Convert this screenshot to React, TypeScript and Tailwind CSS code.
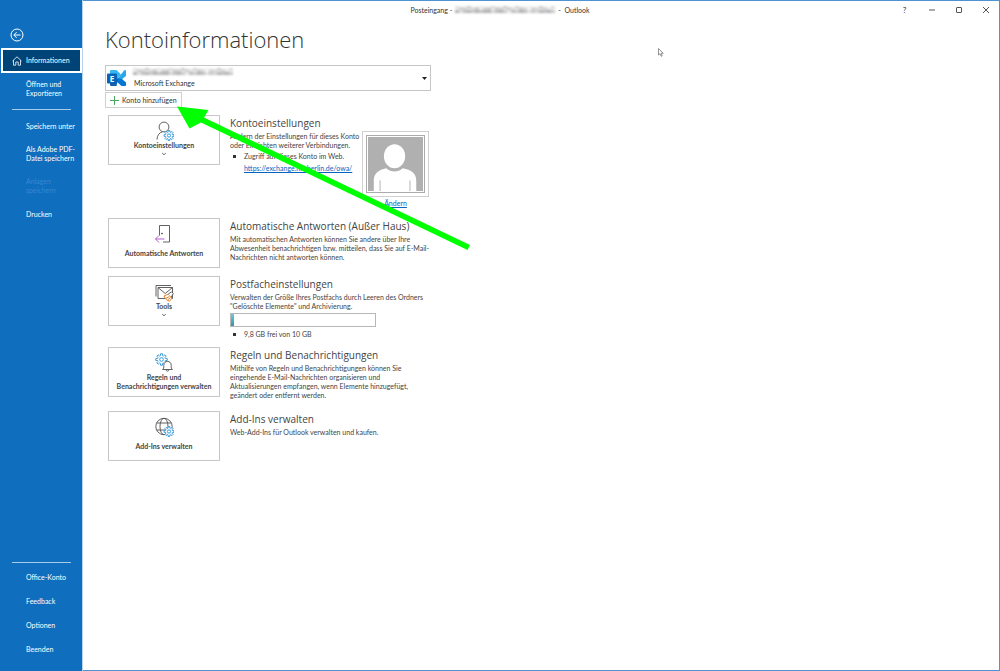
import type { ReactNode } from "react";
import clsx from "clsx";

const topItems = [["Öffnen und", "Exportieren"]];
const saveItems = [
  { lines: ["Speichern unter"] },
  { lines: ["Als Adobe PDF-", "Datei speichern"] },
  { lines: ["Anlagen", "speichern"], disabled: true },
  { lines: ["Drucken"] },
];
const bottomItems = ["Office-Konto", "Feedback", "Optionen", "Beenden"];

const Lines = ({ lines }: { lines: string[] }) => (
  <>
    {lines.map((line) => (
      <span key={line} className="block whitespace-nowrap">
        {line}
      </span>
    ))}
  </>
);

/* ---------- Icons ---------- */

const gearPoints = (cx: number, cy: number, r: number) => {
  const points: string[] = [];
  for (let i = 0; i < 8; i++) {
    const base = (i * Math.PI) / 4;
    [
      [-0.26, 0.7],
      [-0.17, 1],
      [0.17, 1],
      [0.26, 0.7],
    ].forEach(([a, k]) => {
      points.push(`${(cx + Math.cos(base + a) * r * k).toFixed(2)},${(cy + Math.sin(base + a) * r * k).toFixed(2)}`);
    });
  }
  return points.join(" ");
};

const Gear = ({ cx, cy, r }: { cx: number; cy: number; r: number }) => (
  <g stroke="#3a9be0" strokeWidth="1" fill="#fff" strokeLinejoin="round">
    <polygon points={gearPoints(cx, cy, r)} />
    <circle cx={cx} cy={cy} r={r * 0.32} />
  </g>
);

const Icon = ({ children }: { children: ReactNode }) => (
  <svg viewBox="0 0 20 20" className="size-5 shrink-0" fill="none" stroke="#505050" strokeWidth="0.9" aria-hidden="true">
    {children}
  </svg>
);

const AccountIcon = () => (
  <Icon>
    <circle cx="10" cy="6" r="4.900" />
    <path d="M3 18.500c.2-4.200 2.200-6.800 5.400-7.700" />
    <Gear cx={15} cy={14.500} r={5} />
  </Icon>
);

const DoorIcon = () => (
  <Icon>
    <path d="M5.500 11.500V1.500h10v16.500H9" />
    <circle cx="8" cy="9.500" r=".5" fill="#505050" />
    <path d="M10.500 15H1.500M5 11.500L1.500 15L5 18.500" stroke="#b65fcf" strokeWidth="1" />
  </Icon>
);

const ToolsIcon = () => (
  <Icon>
    <path d="M2 14.500V3.500H17" />
    <path d="M4 5.500h14.500v11H4zM4 5.500l7.200 6L18.500 5.500" fill="#fff" />
    <path d="M10 14l4.200-1.800 3.800 3.800-2.500 3.200c-2.500-.6-4.500-2.300-5.500-5.200z" fill="#fff" stroke="#e8822a" strokeWidth="1" />
    <path d="M11.500 16.500l4-2M13.500 18l3-2.500" stroke="#e8822a" strokeWidth="1" />
    <path d="M14.200 12.200l3.300-2.400 1.800 1.800-2 3.400" fill="#fff" />
  </Icon>
);

const RulesIcon = () => (
  <Icon>
    <Gear cx={7.500} cy={6.500} r={5.800} />
    <path d="M8.500 16.500c1.300-.8 1.300-2 1.300-4.200 0-2.400 1.600-3.900 3.700-3.900s3.700 1.500 3.700 3.900c0 2.200 0 3.400 1.300 4.200z" fill="#fff" />
    <path d="M12 16.800c.2 1.700 2.800 1.700 3 0" />
  </Icon>
);

const GlobeIcon = () => (
  <Icon>
    <circle cx="10" cy="9.500" r="8.200" />
    <ellipse cx="10" cy="9.500" rx="4" ry="8.200" />
    <path d="M2.500 6h15M2.500 13h15" />
    <Gear cx={15} cy={14.500} r={5} />
  </Icon>
);

const ExchangeIcon = () => (
  <svg viewBox="0 0 20 18" className="h-[18px] w-5 shrink-0" aria-hidden="true">
    <path d="M3 1.500Q3 1 4 1h5.500L14 5.500L10.500 10H3z" fill="#35b8f1" />
    <path d="M14 5.500L17 1.500q.5-.5 1-.5 1 0 1 1v5l-4.500 3.500-4-.500z" fill="#28a8ea" />
    <path d="M10.500 9l4.500 1 4 3.500V16q0 1-1 1h-3.500L9 12z" fill="#0078d4" />
    <path d="M3 10h8l-1.500 7H4q-1 0-1-1z" fill="#0f62ac" />
    <rect x="0" y="4.500" width="10" height="10" rx="1" fill="#0a63b5" />
    <text x="5" y="12.500" fontSize="8" fontWeight="700" fill="#fff" textAnchor="middle" fontFamily="Open Sans, sans-serif">
      E
    </text>
  </svg>
);

const Chevron = () => (
  <svg viewBox="0 0 6 4" className="mt-[2px] h-1 w-[6px]" fill="none" stroke="#505050" strokeWidth=".9" aria-hidden="true">
    <path d="M1.200 1L3 2.800L4.800 1" />
  </svg>
);

/* Pixelated strip that hides a mail address */
const shades = [4, 7, 6, 7, 5, 7, 3, 6, 7, 5, 7, 6, 7, 7, 4, 6, 7, 5, 2, 6, 5, 7, 6, 3, 5];

const Redacted = () => (
  <svg viewBox="0 0 100 8" className="h-2 w-[100px] shrink-0 blur-[1px]" aria-hidden="true">
    {shades.map((shade, i) => (
      <g key={i} fill="#666">
        <rect x={i * 4} y={i % 3 === 0 ? 0 : 1} width="4" height="3" opacity={shade / 22} />
        <rect x={i * 4} y="4" width="4" height="3" opacity={shades[(i + 5) % 25] / 14} />
      </g>
    ))}
  </svg>
);

/* ---------- Sidebar ---------- */

const NavItem = ({ lines, disabled }: { lines: string[]; disabled?: boolean }) => (
  <button
    type="button"
    disabled={disabled}
    className={clsx(
      "flex min-h-6 w-full flex-col justify-center py-[7px] pl-[26px] text-left",
      disabled ? "text-[#3588d2]" : "text-white",
    )}
  >
    <Lines lines={lines} />
  </button>
);

const Sidebar = () => (
  <nav className="flex w-[83px] shrink-0 flex-col border-r border-[#b5d3ee] bg-[#106ebe] pb-[10px] pt-7">
    <button type="button" aria-label="Zurück" className="ml-[10px] size-[14px]">
      <svg viewBox="0 0 14 14" className="size-[14px]" fill="none" stroke="#fff" strokeWidth="1">
        <circle cx="7" cy="7" r="6" />
        <path d="M10.500 7H4M6.600 4.200L3.800 7L6.600 9.800" />
      </svg>
    </button>
    <button
      type="button"
      className="ml-px mt-[6px] flex h-[25px] w-[81px] items-center border-2 border-white bg-[#004377] pl-[9px] text-white"
    >
      <svg viewBox="0 0 10 10" className="size-[10px]" fill="none" stroke="#fff" strokeWidth=".8" aria-hidden="true">
        <path d="M.5 5L5 .8L9.500 5M1.500 4.200v5h2.300V6h2.400v3.200h2.300v-5" />
      </svg>
      <span className="ml-1">Informationen</span>
    </button>
    {topItems.map((lines) => (
      <NavItem key={lines[0]} lines={lines} />
    ))}
    <hr className="my-1 ml-3 mr-[11px] border-[#a9cbea]" />
    {saveItems.map((item) => (
      <NavItem key={item.lines[0]} {...item} />
    ))}
    <div className="mt-auto">
      <hr className="mb-[2px] ml-3 mr-[11px] border-[#a9cbea]" />
      {bottomItems.map((label) => (
        <NavItem key={label} lines={[label]} />
      ))}
    </div>
  </nav>
);

/* ---------- Title bar ---------- */

const windowButtons = [
  { label: "Minimieren", icon: <path d="M2 5h6" /> },
  { label: "Maximieren", icon: <rect x="2.500" y="2.500" width="5" height="5" rx=".5" /> },
  { label: "Schließen", icon: <path d="M2 2l6 6M8 2L2 8" /> },
];

const TitleBar = () => (
  <header className="grid h-[18px] items-center">
    <div className="col-start-1 row-start-1 mr-[82px] flex items-center justify-self-center text-[#333]">
      <span>Posteingang -</span>
      <span className="mx-[3px]">
        <Redacted />
      </span>
      <span>- &nbsp;Outlook</span>
    </div>
    <div className="col-start-1 row-start-1 flex items-center justify-self-end">
      <button type="button" aria-label="Hilfe" className="w-[27px] text-center text-[8px] leading-3 text-[#333]">
        ?
      </button>
      {windowButtons.map(({ label, icon }) => (
        <button key={label} type="button" aria-label={label} className="flex w-[27px] justify-center">
          <svg viewBox="0 0 10 10" className="size-[10px]" fill="none" stroke="#555" strokeWidth="1">
            {icon}
          </svg>
        </button>
      ))}
    </div>
  </header>
);

/* ---------- Content ---------- */

type SectionProps = {
  icon: ReactNode;
  label: string[];
  menu?: boolean;
  title: string;
  children: ReactNode;
};

const Section = ({ icon, label, menu, title, children }: SectionProps) => (
  <section className="flex gap-[10px]">
    <button
      type="button"
      className="flex h-[50px] w-28 shrink-0 flex-col items-center border border-[#c6c6c6] pt-[5px] font-bold text-[#444]"
    >
      {icon}
      <span className={clsx("text-center", !menu && label.length === 1 && "mt-[5px]")}>
        <Lines lines={label} />
      </span>
      {menu && <Chevron />}
    </button>
    <div className="text-[#444]">
      <h2 className="font-['Open_Sans',sans-serif] text-[10px] leading-4">{title}</h2>
      {children}
    </div>
  </section>
);

const Bullet = () => <span className="ml-[3px] mr-2 size-[3px] bg-[#333]" />;

const Avatar = () => (
  <div className="flex w-[67px] flex-col items-center">
    <div className="w-full border border-[#d0d0d0] p-[3px]">
      <div className="border border-[#ababab] p-px">
        <svg viewBox="0 0 57 56" className="block w-full bg-[#b0b0b0]" role="img" aria-label="Profilbild">
          <ellipse cx="27.500" cy="20" rx="11" ry="12.500" fill="#fff" />
          <path d="M6 56V45c0-7 5-11 13-12.500 5 4.500 12 4.500 17 0C45 34 50 38 50 45v11z" fill="#fff" />
          <path d="M12.500 45v11M43.500 45v11" stroke="#b0b0b0" strokeWidth="1" />
        </svg>
      </div>
    </div>
    <a href="#aendern" className="mt-[2px] text-[#0563c1] underline">
      Ändern
    </a>
  </div>
);

const App = () => {
  return (
    <div className="relative flex min-h-screen overflow-hidden bg-white font-['Lato','Open_Sans',sans-serif] text-[7px] leading-[9px]">
      <Sidebar />
      <div className="min-w-0 flex-1 border-b border-r border-t border-[#4f93d2]">
        <TitleBar />
        <main className="pl-[22px] pt-px">
          <h1 className="font-['Open_Sans',sans-serif] text-[22px] font-light leading-[38px] text-[#333]">
            Kontoinformationen
          </h1>

          <div className="mt-[7px] flex h-[26px] w-[326px] items-center border border-[#c6c6c6] pl-px pr-[3px]">
            <ExchangeIcon />
            <div className="ml-[6px] flex flex-1 flex-col gap-[2px]">
              <Redacted />
              <select aria-label="Konto" className="h-[10px] w-full appearance-none bg-transparent pl-px text-[#333]">
                <option>Microsoft Exchange</option>
              </select>
            </div>
            <svg viewBox="0 0 5 3" className="h-[3px] w-[5px]" fill="#222" aria-hidden="true">
              <path d="M0 0h5L2.500 3z" />
            </svg>
          </div>
          <button
            type="button"
            className="mt-px flex h-4 w-[77px] items-center whitespace-nowrap border border-[#d0d0d0] pl-1 text-[#333]"
          >
            <svg viewBox="0 0 9 9" className="size-[9px] shrink-0" stroke="#4ba564" strokeWidth="1" aria-hidden="true">
              <path d="M4.500 0v9M0 4.500h9" />
            </svg>
            <span className="ml-[3px]">Konto hinzufügen</span>
          </button>

          <div className="ml-[3px] mt-[7px] flex flex-col gap-2">
            <Section icon={<AccountIcon />} label={["Kontoeinstellungen"]} menu title="Kontoeinstellungen">
              <div className="flex pb-[2px]">
                <div className="w-[132px]">
                  <p className="pt-px">
                    <Lines lines={["Ändern der Einstellungen für dieses Konto", "oder Einrichten weiterer Verbindungen."]} />
                  </p>
                  <ul>
                    <li className="mt-[2px] flex items-center whitespace-nowrap">
                      <Bullet />
                      Zugriff auf dieses Konto im Web.
                    </li>
                  </ul>
                  <a href="#owa" className="ml-[14px] mt-[3px] block whitespace-nowrap text-[#0563c1] underline">
                    https://exchange.hu-berlin.de/owa/
                  </a>
                </div>
                <Avatar />
              </div>
            </Section>

            <Section icon={<DoorIcon />} label={["Automatische Antworten"]} title="Automatische Antworten (Außer Haus)">
              <p className="pt-px">
                <Lines
                  lines={[
                    "Mit automatischen Antworten können Sie andere über Ihre",
                    "Abwesenheit benachrichtigen bzw. mitteilen, dass Sie auf E-Mail-",
                    "Nachrichten nicht antworten können.",
                  ]}
                />
              </p>
            </Section>

            <Section icon={<ToolsIcon />} label={["Tools"]} menu title="Postfacheinstellungen">
              <p className="pt-px">
                <Lines
                  lines={["Verwalten der Größe Ihres Postfachs durch Leeren des Ordners", '"Gelöschte Elemente" und Archivierung.']}
                />
              </p>
              <div className="mt-[2px] h-[14px] w-[146px] border border-[#b8b8b8]">
                <div className="h-full w-[3px] bg-linear-to-b from-[#6cc9da] to-[#3795ab]" />
              </div>
              <p className="mt-[3px] flex items-center">
                <Bullet />
                9,8 GB frei von 10 GB
              </p>
            </Section>

            <Section
              icon={<RulesIcon />}
              label={["Regeln und", "Benachrichtigungen verwalten"]}
              title="Regeln und Benachrichtigungen"
            >
              <p className="pb-[3px] pt-px">
                <Lines
                  lines={[
                    "Mithilfe von Regeln und Benachrichtigungen können Sie",
                    "eingehende E-Mail-Nachrichten organisieren und",
                    "Aktualisierungen empfangen, wenn Elemente hinzugefügt,",
                    "geändert oder entfernt werden.",
                  ]}
                />
              </p>
            </Section>

            <Section icon={<GlobeIcon />} label={["Add-Ins verwalten"]} title="Add-Ins verwalten">
              <p className="pt-px">Web-Add-Ins für Outlook verwalten und kaufen.</p>
            </Section>
          </div>
        </main>
      </div>

      {/* Pointer arrow over the page */}
      <svg
        viewBox="0 0 300 150"
        className="pointer-events-none absolute left-[175px] top-[102px] h-[150px] w-[300px]"
        aria-hidden="true"
      >
        <path d="M2 4.500L33.500 8L29 15.500L295 143L292.500 148L26 20.500L14.500 26.500z" fill="#00ff00" />
      </svg>

      {/* Mouse cursor */}
      <svg viewBox="0 0 6 9" className="pointer-events-none absolute left-[658px] top-12 h-[9px] w-[6px]" aria-hidden="true">
        <path d="M.5.500v6.500l1.500-1.300 1.200 2.600 1-.5L3.200 5.300h2z" fill="#fff" stroke="#666" strokeWidth=".7" />
      </svg>
    </div>
  );
};

export default App;
